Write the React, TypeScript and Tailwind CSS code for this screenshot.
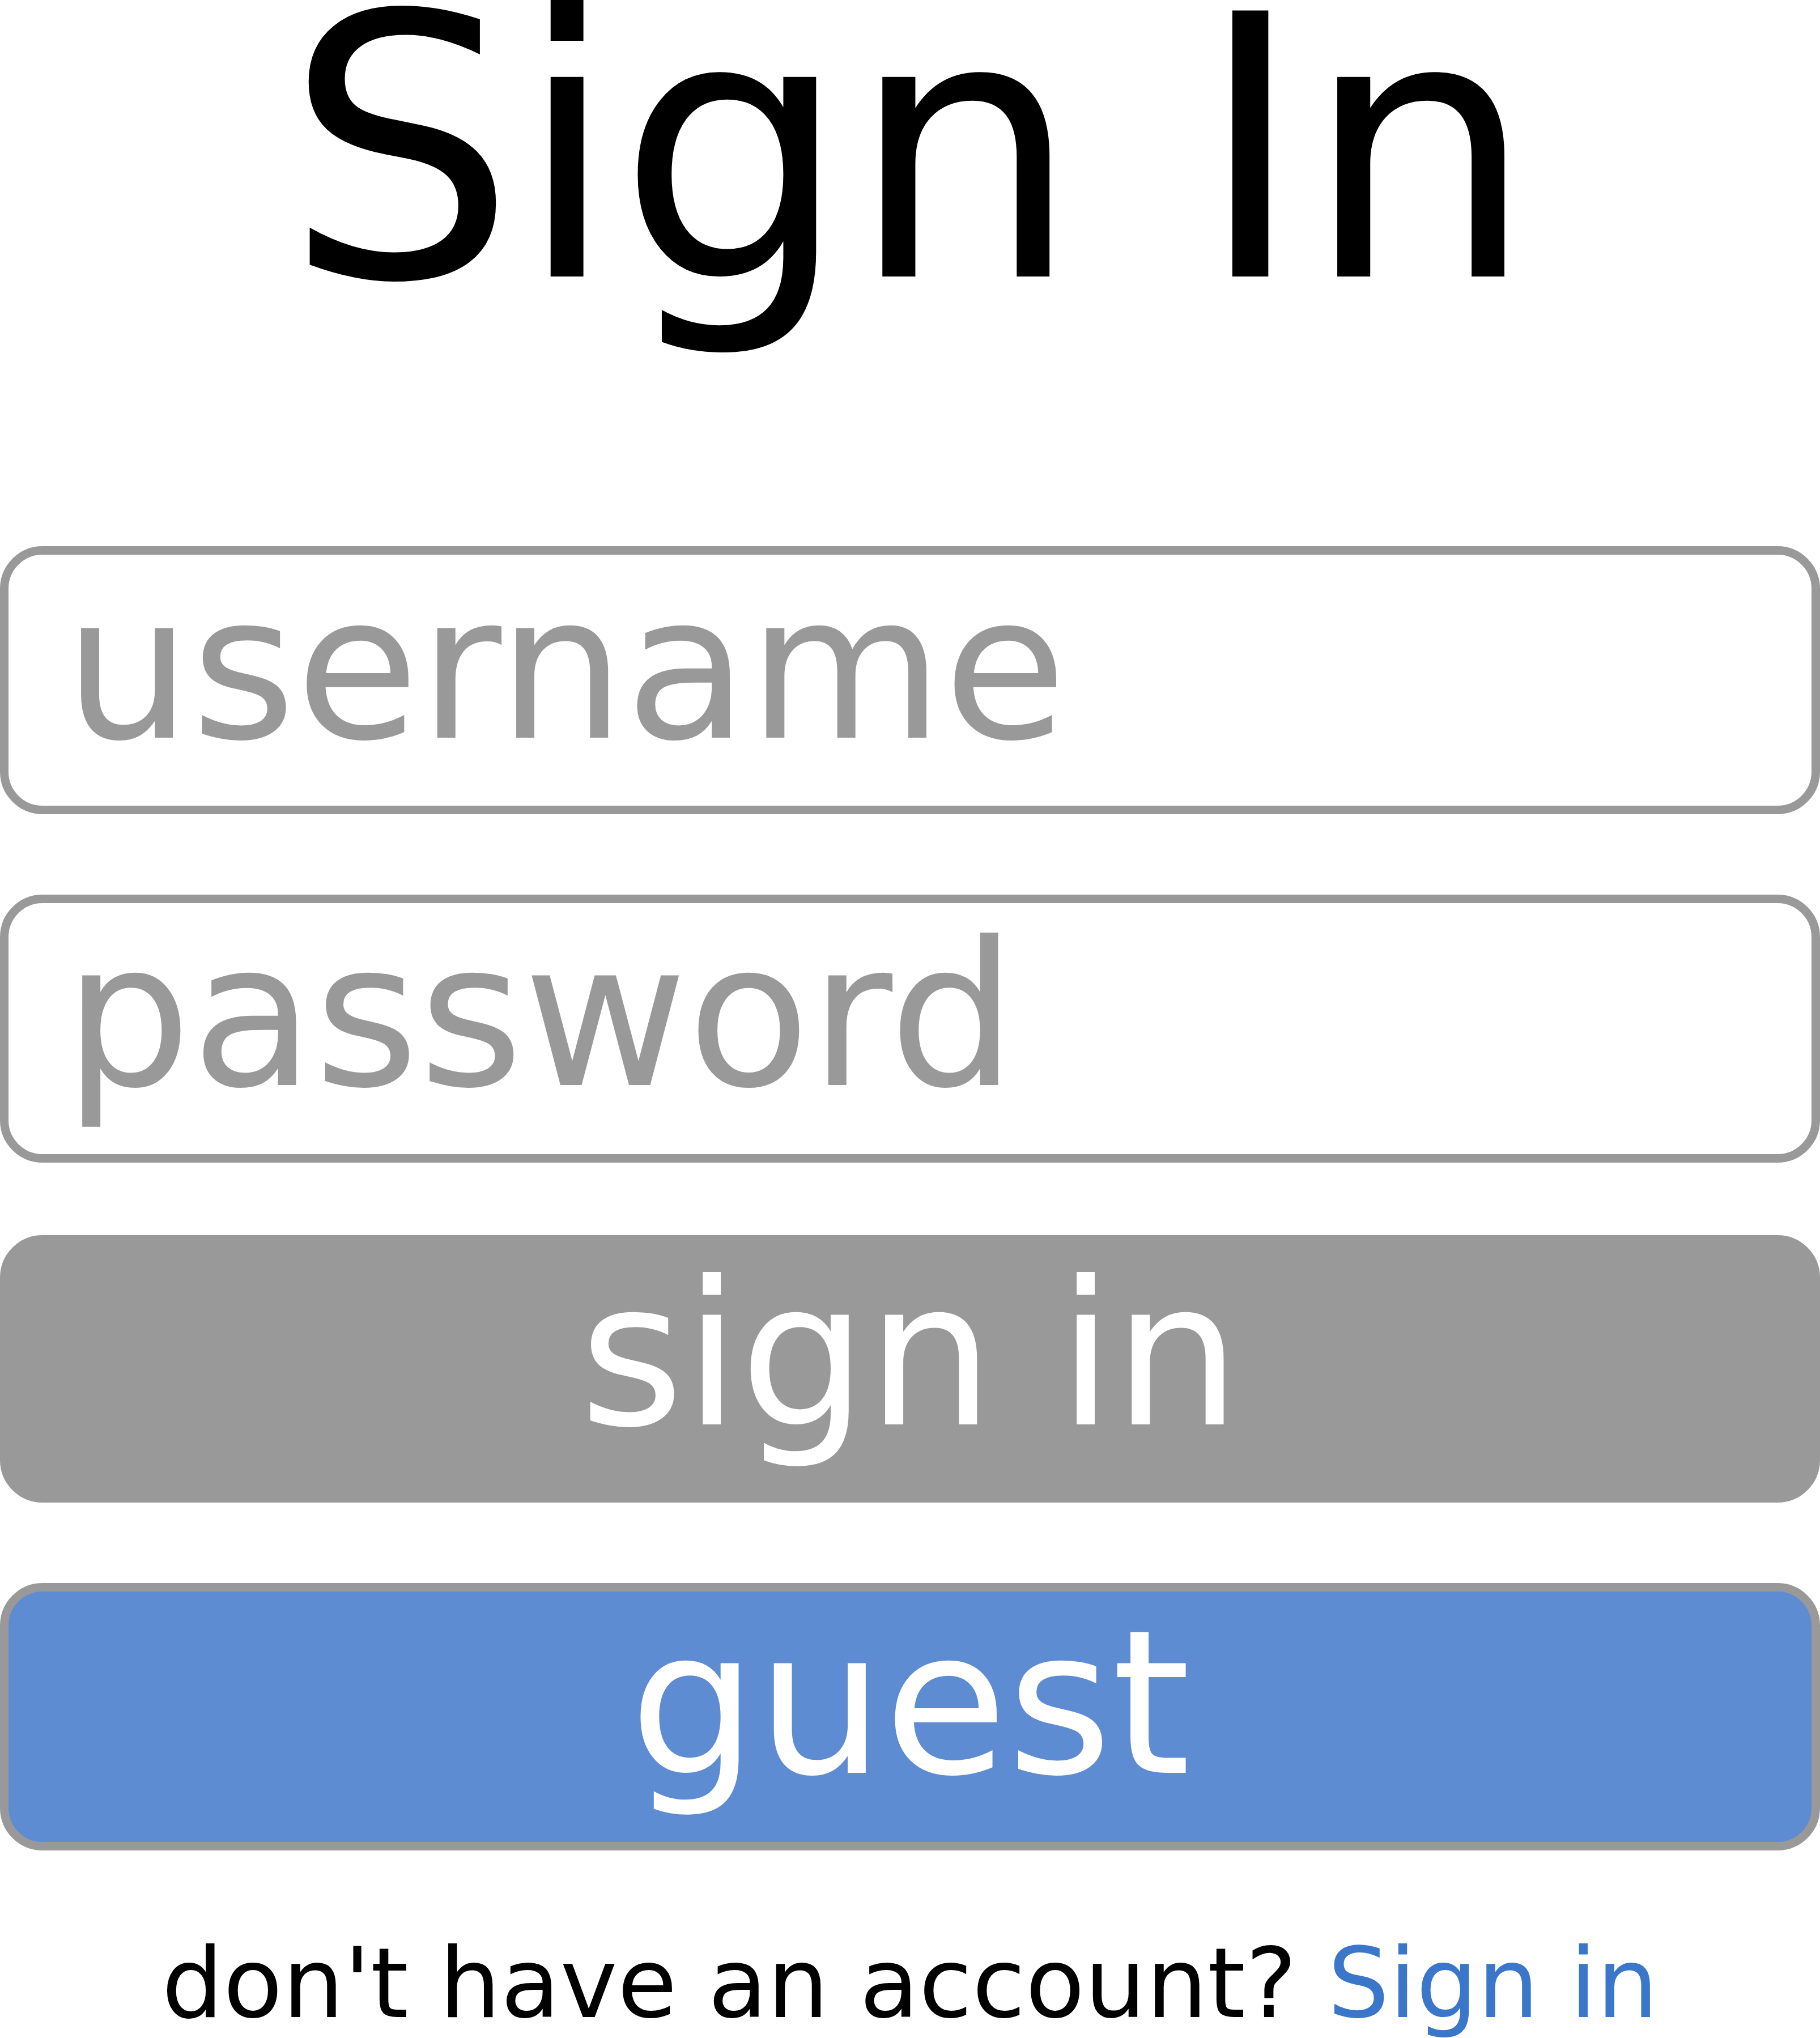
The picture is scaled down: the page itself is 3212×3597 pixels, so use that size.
import React from 'react';

export default function App() {
  return (
    <div className="min-h-screen w-full bg-white text-black font-['DejaVu_Sans',sans-serif]">
      {/* Title */}
      <h1 className="text-center text-[644px] leading-[531px] font-normal">Sign In</h1>

      <form className="mt-[433px] flex flex-col" onSubmit={(e) => e.preventDefault()}>
        <input
          type="text"
          placeholder="username"
          className="h-[473px] w-full rounded-[75px] border-[15px] border-[#999999] bg-white pl-[98px] pb-[44px] text-[354px] leading-[normal] text-[#999999] placeholder:text-[#999999] outline-none"
        />
        <input
          type="password"
          placeholder="password"
          className="mt-[142px] h-[473px] w-full rounded-[75px] border-[15px] border-[#999999] bg-white pl-[98px] pb-[48px] text-[354px] leading-[normal] text-[#999999] placeholder:text-[#999999] outline-none"
        />
        <button
          type="submit"
          className="mt-[128px] flex h-[472px] w-full items-center justify-center rounded-[75px] border-[15px] border-[#999999] bg-[#999999] pb-[51px] text-[354px] leading-[normal] text-white"
        >
          sign in
        </button>
        <button
          type="button"
          className="mt-[142px] flex h-[472px] w-full items-center justify-center rounded-[75px] border-[15px] border-[#999999] bg-[#5e8cd2] pb-[49px] text-[354px] leading-[normal] text-white"
        >
          guest
        </button>
      </form>

      <p className="mt-[135px] text-center text-[171px] leading-[normal]">
        don't have an account? <a href="#" className="text-[#3a76c9]">Sign in</a>
      </p>
    </div>
  );
}
